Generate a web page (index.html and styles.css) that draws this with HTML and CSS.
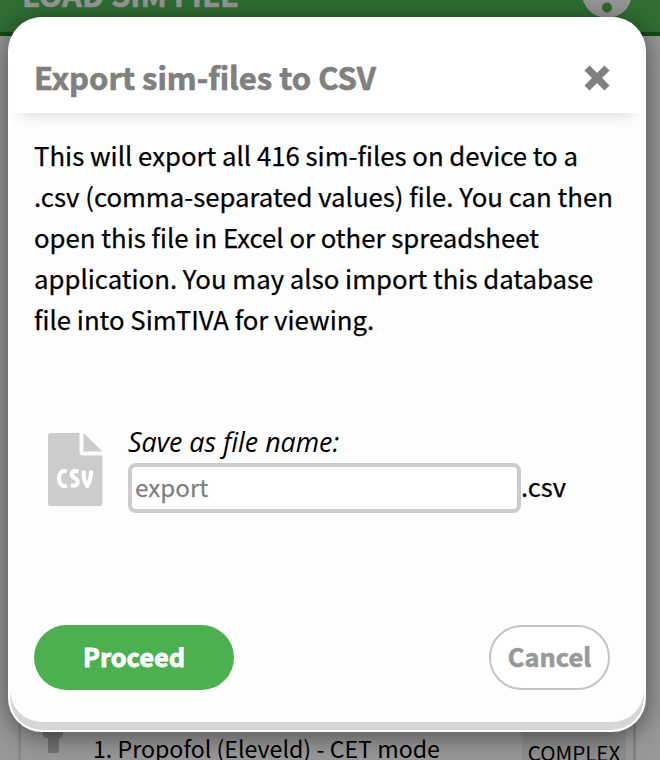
FILE: index.html
```html
<!DOCTYPE html>
<html lang="en">
<head>
<meta charset="utf-8">
<title>Export sim-files to CSV</title>
<link rel="stylesheet" href="styles.css">
</head>
<body>
<div class="app">
  <header class="topbar">
    <h1 class="topbar-title">LOAD SIM FILE</h1>
    <svg class="help" viewBox="0 0 50 50"><circle cx="25" cy="25" r="25" fill="#979797"/><path d="M17 19a8 8 0 1 1 8 9v4" fill="none" stroke="#2e6831" stroke-width="6"/><circle cx="25" cy="39.500" r="5" fill="#2e6831"/></svg>
  </header>
  <main class="list">
    <div class="row">
      <svg class="pin" viewBox="0 0 20 40"><path d="M0 0h20v20q0 4-4 4v13q0 2-2 2H7q-2 0-2-2V24q-5 0-5-4z" fill="#727272"/></svg>
      <span class="row-name">1. Propofol (Eleveld) - CET mode</span>
      <span class="tag">COMPLEX</span>
    </div>
  </main>
</div>
<section class="modal">
  <div class="modal-head">
    <h2 class="modal-title">Export sim-files to CSV</h2>
    <svg class="close" viewBox="0 0 26 26"><path d="M3 3l20 20M23 3L3 23" stroke="#808080" stroke-width="7.200"/></svg>
  </div>
  <div class="modal-body">
    <p class="text">This will export all 416 sim-files on device to a<br>.csv (comma-separated values) file. You can then<br>open this file in Excel or other spreadsheet<br>application. You may also import this database<br>file into SimTIVA for viewing.</p>
    <div class="save">
      <svg class="csv" viewBox="0 0 55 73"><path d="M3 0H31.500V19q0 3.500 3.500 3.500H54.500V70q0 3-3 3H3q-3 0-3-3V3q0-3 3-3zM35.500 0L54.500 18.500H35.500z" fill="#ccc"/><path d="M18.800 38.500C13 36.500 11 41 11 45.500s2.500 9 7.800 7M30.500 38.500c-8-2-8.500 4.500-4 6.500 5 2.300 4.500 9-3.700 7.300M35.500 37.500c0 8 1 12 3.600 15.500 2.500-3.500 4-8 4-15.500" fill="none" stroke="#fff" stroke-width="4.100" stroke-linejoin="round"/></svg>
      <div class="field">
        <label class="label" for="name">Save as file name:</label>
        <div class="input-row"><input class="input" id="name" type="text" placeholder="export"><span class="ext">.csv</span></div>
      </div>
    </div>
    <div class="actions">
      <button class="btn proceed">Proceed</button>
      <button class="btn cancel">Cancel</button>
    </div>
  </div>
</section>
</body>
</html>
```
FILE: styles.css
```css
* { box-sizing: border-box; }
body {
  margin: 0;
  width: 660px;
  height: 760px;
  overflow: hidden;
  position: relative;
  background: #989898;
  font-family: "Noto Sans CJK SC", "Noto Sans", sans-serif;
  color: #000;
}
.app { height: 760px; display: flex; flex-direction: column; }
.topbar {
  height: 36px;
  flex: none;
  display: flex;
  justify-content: space-between;
  padding: 0 28px 0 22px;
  background: #306e33;
  border-bottom: 4px solid #144a15;
}
.topbar-title { margin: -26px 0 0; font-size: 30.9px; line-height: 40px; font-weight: 700; -webkit-text-stroke: .6px #979797; color: #979797; white-space: nowrap; }
.help { width: 50px; height: 50px; margin-top: -32px; }
.list { flex: 1; display: flex; align-items: flex-end; padding: 0 24px 0 18px; }
.row {
  height: 60px;
  width: 100%;
  display: flex;
  padding-right: 7px;
  border-left: 3px solid #888;
  border-right: 3px solid #828282;
}
.pin { width: 20px; height: 40px; margin: 14px 0 0 22px; flex: none; }
.row-name { margin-left: 30px; padding-top: 28px; font-size: 23.2px; line-height: 40px; white-space: nowrap; flex: 1; }
.tag { width: 104px; padding-top: 32px; background: #8e8e8e; text-align: center; font-size: 20.6px; line-height: 40px; }
.modal {
  position: absolute;
  left: 8px;
  top: 17px;
  width: 638px;
  height: 715px;
  border-radius: 34px;
  background: #fdfdfd;
  border: 2px solid #fff;
  border-top: 0;
  box-shadow: inset 0 -8px 0 #d6d6d6, 0 4px 26px rgba(0, 0, 0, .5);
}
.modal-head {
  height: 96px;
  display: flex;
  justify-content: space-between;
  align-items: center;
  padding: 26px 34px 0 24px;
  border-radius: 34px 34px 0 0;
  background: #fff;
  box-shadow: 0 14px 14px -12px rgba(0, 0, 0, .15);
}
.modal-title { margin: -3px 0 0; font-size: 31px; line-height: 40px; color: #808080; -webkit-text-stroke: .7px #808080; white-space: nowrap; }
.close { width: 26px; height: 26px; }
.modal-body { padding: 21px 34px 0 24px; }
.text { margin: 0; font-size: 25.75px; line-height: 41px; white-space: nowrap; -webkit-text-stroke: .25px #000; }
.save { display: flex; margin-top: 82px; padding-left: 13.5px; }
.csv { width: 55px; height: 73px; margin-top: 12px; }
.field { margin-left: 25.5px; }
.label { display: block; padding-top: 1px; font: italic 26.8px/40px "Open Sans", sans-serif; white-space: nowrap; }
.input-row { display: flex; align-items: center; margin-top: 1px; }
.input {
  width: 393px;
  height: 50px;
  padding: 0 3px 3px;
  border: 4px solid #ccc;
  border-radius: 8px;
  background: #fff;
  font: 24.2px "Noto Sans CJK SC", sans-serif;
}
.input::placeholder { color: #808080; -webkit-text-stroke: .25px #808080; }
.ext { font-size: 25.5px; line-height: 40px; margin-top: -4px; -webkit-text-stroke: .25px #000; }
.actions { display: flex; justify-content: space-between; margin-top: 112px; }
.btn { height: 65px; border-radius: 33px; font: bold 25.4px "Noto Sans CJK SC", sans-serif; padding: 0 0 4px; }
.proceed { width: 200px; border: 0; background: #4caf50; color: #fff; -webkit-text-stroke: .8px #fff; }
.cancel { width: 121px; border: 2px solid #c4c4c4; background: #fff; color: #999; -webkit-text-stroke: .6px #999; }
```
